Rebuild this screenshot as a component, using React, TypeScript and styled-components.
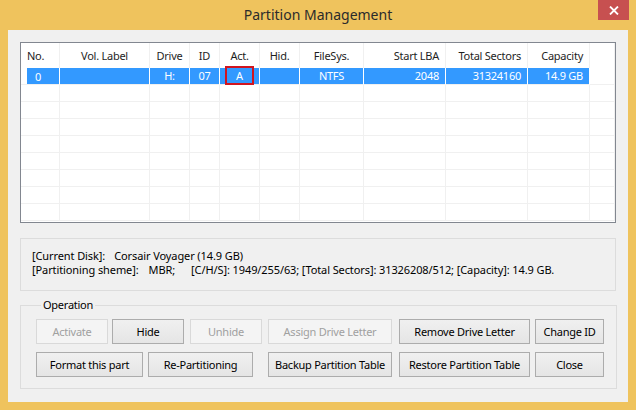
import React from "react";
import styled, { createGlobalStyle } from "styled-components";

type Align = "left" | "center" | "right";

type Column = {
  title: string;
  width: string;
  align: Align;
};

const columns: Column[] = [
  { title: "No.", width: "39px", align: "left" },
  { title: "Vol. Label", width: "90px", align: "center" },
  { title: "Drive", width: "40px", align: "center" },
  { title: "ID", width: "30px", align: "center" },
  { title: "Act.", width: "40px", align: "center" },
  { title: "Hid.", width: "40px", align: "center" },
  { title: "FileSys.", width: "64px", align: "center" },
  { title: "Start LBA", width: "82px", align: "right" },
  { title: "Total Sectors", width: "82px", align: "right" },
  { title: "Capacity", width: "62px", align: "right" },
  { title: "", width: "1fr", align: "left" },
];

const partition = ["0", "", "H:", "07", "A", "", "NTFS", "2048", "31324160", "14.9 GB"];

const EMPTY_ROWS = 8;

type Btn = { label: string; w: number; ml: number; disabled?: boolean };

const buttonRows: Btn[][] = [
  [
    { label: "Activate", w: 72, ml: 0, disabled: true },
    { label: "Hide", w: 72, ml: 4 },
    { label: "Unhide", w: 72, ml: 6, disabled: true },
    { label: "Assign Drive Letter", w: 124, ml: 6, disabled: true },
    { label: "Remove Drive Letter", w: 131, ml: 7 },
    { label: "Change ID", w: 69, ml: 5 },
  ],
  [
    { label: "Format this part", w: 107, ml: 0 },
    { label: "Re-Partitioning", w: 105, ml: 5 },
    { label: "Backup Partition Table", w: 124, ml: 15 },
    { label: "Restore Partition Table", w: 131, ml: 7 },
    { label: "Close", w: 69, ml: 5 },
  ],
];

const gridTemplate = columns.map((c) => c.width).join(" ");

const App = () => {
  return (
    <>
      <GlobalStyle />
      <Frame>
        <TitleBar>
          Partition Management
          <CloseButton>
            <svg width="10" height="9" viewBox="0 0 10 9">
              <path d="M1 0.5 L9 8.5 M9 0.5 L1 8.5" stroke="#fff" strokeWidth="1.8" />
            </svg>
          </CloseButton>
        </TitleBar>
        <Client>
          <ListView>
            <HeaderRow>
              {columns.map((col, idx) => (
                <HeaderCell key={idx} align={col.align}>
                  {col.title}
                </HeaderCell>
              ))}
            </HeaderRow>
            <Row>
              {columns.map((col, idx) => (
                <Cell
                  key={idx}
                  align={col.align}
                  selected={idx < partition.length}
                  first={idx === 0}
                >
                  {idx === 0 ? <FirstInner>{partition[0]}</FirstInner> : partition[idx]}
                  {idx === 4 && <Marker />}
                </Cell>
              ))}
            </Row>
            {Array.from({ length: EMPTY_ROWS }).map((_, r) => (
              <Row key={r}>
                {columns.map((col, idx) => (
                  <Cell key={idx} align={col.align} />
                ))}
              </Row>
            ))}
          </ListView>

          <InfoBox>
            <InfoLine>
              <span>[Current Disk]:</span>
              <Value gap={9}>Corsair Voyager (14.9 GB)</Value>
            </InfoLine>
            <InfoLine>
              <span>[Partitioning sheme]:</span>
              <Value gap={10}>MBR;</Value>
              <Value gap={16}>
                [C/H/S]: 1949/255/63; [Total Sectors]: 31326208/512; [Capacity]: 14.9 GB.
              </Value>
            </InfoLine>
          </InfoBox>

          <Group>
            <Legend>Operation</Legend>
            {buttonRows.map((row, r) => (
              <ButtonRow key={r}>
                {row.map((b) => (
                  <Button key={b.label} w={b.w} ml={b.ml} disabled={b.disabled}>
                    {b.label}
                  </Button>
                ))}
              </ButtonRow>
            ))}
          </Group>
        </Client>
      </Frame>
    </>
  );
};

const GlobalStyle = createGlobalStyle`
  body {
    margin: 0;
    overflow: hidden;
    font-family: "Noto Sans", "Open Sans", sans-serif;
  }
`;

const Frame = styled.div`
  width: 636px;
  height: 410px;
  box-sizing: border-box;
  padding: 0 8px 8px;
  background: #efc35d;
  display: flex;
  flex-direction: column;
`;

const TitleBar = styled.div`
  position: relative;
  height: 30px;
  display: flex;
  align-items: center;
  justify-content: center;
  font-size: 14px;
  color: #2b2b2b;
  padding-bottom: 1px;
  box-sizing: border-box;
`;

const CloseButton = styled.div`
  position: absolute;
  top: 0;
  right: -1px;
  width: 31px;
  height: 20px;
  background: #c75050;
  display: flex;
  align-items: center;
  justify-content: center;
`;

const Client = styled.div`
  flex: 1;
  background: #f0f0f0;
  padding: 12px 12px 0 12px;
  display: flex;
  flex-direction: column;
  font-size: 11px;
  letter-spacing: -0.25px;
  color: #000;
`;

const ListView = styled.div`
  width: 596px;
  height: 181px;
  box-sizing: border-box;
  border: 1px solid #828790;
  background: #fff;
  overflow: hidden;
`;

const HeaderRow = styled.div`
  display: grid;
  grid-template-columns: ${gridTemplate};
  height: 25px;
`;

const HeaderCell = styled.div<{ align: Align }>`
  display: flex;
  align-items: center;
  justify-content: ${({ align }) =>
    align === "left" ? "flex-start" : align === "right" ? "flex-end" : "center"};
  padding: 0 6px 1px;
  border-right: 1px solid #f0f0f0;
  white-space: nowrap;
  color: #1e1e1e;
`;

const Row = styled.div`
  display: grid;
  grid-template-columns: ${gridTemplate};
  height: 17px;
`;

const Cell = styled.div<{ align: Align; selected?: boolean; first?: boolean }>`
  position: relative;
  display: flex;
  align-items: center;
  justify-content: ${({ align }) =>
    align === "left" ? "flex-start" : align === "right" ? "flex-end" : "center"};
  padding: ${({ first }) => (first ? "0 0 1px 6px" : "0 6px 1px")};
  border-right: 1px solid ${({ selected }) => (selected ? "#fff" : "#f0f0f0")};
  border-bottom: 1px solid #f0f0f0;
  background: ${({ selected, first }) => (selected && !first ? "#3399ff" : "transparent")};
  color: #fff;
  white-space: nowrap;
`;

const FirstInner = styled.div`
  align-self: stretch;
  flex: 1;
  display: flex;
  align-items: center;
  padding-left: 8px;
  margin-bottom: -1px;
  background: #3399ff;
`;

const Marker = styled.div`
  position: absolute;
  left: 5px;
  top: -2px;
  width: 29px;
  height: 19px;
  box-sizing: border-box;
  border: 2px solid #d1141f;
`;

const InfoBox = styled.div`
  margin-top: 15px;
  width: 596px;
  height: 53px;
  box-sizing: border-box;
  border: 1px solid #dcdcdc;
  padding: 10px 11px 0;
  display: flex;
  flex-direction: column;
`;

const InfoLine = styled.div`
  display: flex;
  height: 14px;
  line-height: 14px;
  letter-spacing: -0.1px;
  white-space: nowrap;
`;

const Value = styled.span<{ gap: number }>`
  margin-left: ${({ gap }) => gap}px;
`;

const Group = styled.fieldset`
  margin: 6px 0 0;
  width: 596px;
  box-sizing: border-box;
  border: 1px solid #dcdcdc;
  padding: 6px 12px 11px 15px;
  display: flex;
  flex-direction: column;
  gap: 8px;
`;

const Legend = styled.legend`
  padding: 0 2px;
  margin-left: 5px;
  font-size: 11px;
  line-height: 16px;
`;

const ButtonRow = styled.div`
  display: flex;
  height: 25px;
`;

const Button = styled.button<{ w: number; ml: number }>`
  width: ${({ w }) => w}px;
  margin-left: ${({ ml }) => ml}px;
  height: 25px;
  padding: 0;
  box-sizing: border-box;
  font-family: inherit;
  font-size: 11px;
  letter-spacing: -0.25px;
  color: #000;
  border: 1px solid #acacac;
  background: linear-gradient(#f0f0f0, #e5e5e5);

  &:disabled {
    color: #a0a0a0;
    border-color: #d9d9d9;
    background: #f4f4f4;
  }
`;

export default App;
